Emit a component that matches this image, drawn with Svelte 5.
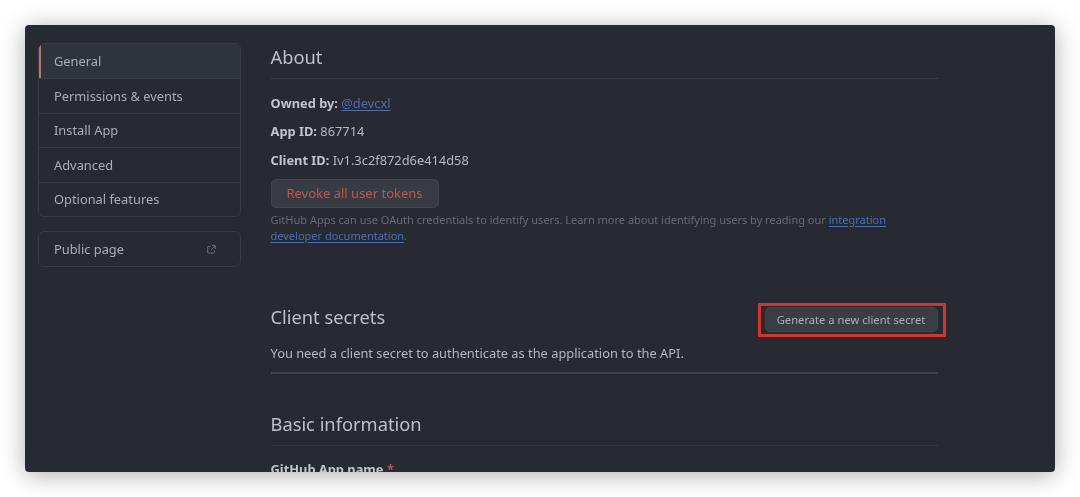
<script>
    const menu = ['General', 'Permissions & events', 'Install App', 'Advanced', 'Optional features']
</script>

<div class="page">
    <div class="window">
        <aside>
            <nav class="menu">
                {#each menu as item, i}
                    <a class="item" class:selected={i === 0}>{item}</a>
                {/each}
            </nav>
            <nav class="menu public">
                <a class="item">
                    Public page
                    <svg width="9" height="9" viewBox="0 0 10 10" fill="none" stroke="#6b7280" stroke-width="1.1">
                        <path d="M4 1.5H1.5a.7.7 0 0 0-.7.7v6a.7.7 0 0 0 .7.7h6a.7.7 0 0 0 .7-.7V6" />
                        <path d="M5.5.8h3.7v3.7M9 1 4.6 5.4" />
                    </svg>
                </a>
            </nav>
        </aside>

        <main>
            <section class="about">
                <h2>About</h2>
                <p class="row"><b>Owned by:</b> <a href="#owner">@devcxl</a></p>
                <p class="row"><b>App ID:</b> 867714</p>
                <p class="row"><b>Client ID:</b> Iv1.3c2f872d6e414d58</p>
                <button class="revoke">Revoke all user tokens</button>
                <p class="note">
                    GitHub Apps can use OAuth credentials to identify users. Learn more about identifying users by reading our <a href="#docs">integration developer documentation</a>.
                </p>
            </section>

            <section class="secrets">
                <div class="secrets-head">
                    <h2>Client secrets</h2>
                    <div class="highlight"><button class="generate">Generate a new client secret</button></div>
                </div>
                <p class="secrets-text">You need a client secret to authenticate as the application to the API.</p>
            </section>

            <section class="basic">
                <h2>Basic information</h2>
                <label>GitHub App name <span>*</span></label>
            </section>
        </main>
    </div>
</div>

<style>
    :global(body) {
        margin: 0;
        background: #fff;
    }

    .page {
        padding: 25px 25px 0;
        height: 472px;
        overflow: hidden;
        font-family: "Noto Sans", sans-serif;
    }

    .window {
        display: flex;
        height: 447px;
        box-sizing: border-box;
        padding: 18px 0 0 13px;
        gap: 29.5px;
        overflow: hidden;
        background: #272a30;
        border-radius: 4px;
        box-shadow: 0 3px 24px rgba(0, 0, 0, 0.32);
        color: #b4b9c1;
        font-size: 12.85px;
    }

    aside {
        width: 203px;
        flex: none;
        filter: blur(0.35px);
    }

    .menu {
        border: 1px solid #373b43;
        border-radius: 6px;
        overflow: hidden;
    }

    .public {
        margin-top: 14px;
    }

    .item {
        display: flex;
        align-items: center;
        justify-content: space-between;
        box-sizing: border-box;
        height: 34.4px;
        padding: 0 24px 0 15px;
        color: #a9aeb7;
        border-top: 1px solid #383c44;
    }

    .item:first-child {
        border-top: 0;
    }

    .selected {
        background: #2f343c;
        box-shadow: inset 2px 0 0 #b5796a;
    }

    main {
        width: 667px;
        flex: none;
        filter: blur(0.35px);
    }

    h2 {
        margin: 0;
        font-size: 18.3px;
        font-weight: 400;
        line-height: 28px;
        color: #bcc0c8;
    }

    .about h2 {
        padding-bottom: 7px;
        border-bottom: 1px solid #383c44;
        margin-bottom: 10px;
    }

    .row {
        margin: 0;
        height: 28.4px;
        line-height: 28px;
        color: #b4b9c1;
    }

    .row b {
        font-weight: 700;
        color: #c0c4cb;
    }

    a[href] {
        color: #4a6fb5;
        text-decoration: underline;
        text-underline-offset: 2px;
    }

    button {
        font-family: inherit;
        border-radius: 5px;
        cursor: pointer;
    }

    .revoke {
        display: block;
        margin-top: 4.5px;
        width: 168px;
        height: 29px;
        padding: 0;
        font-size: 13px;
        color: #c0564f;
        background: #373b42;
        border: 1px solid #42464e;
    }

    .note {
        margin: 4px 0 0;
        font-size: 11px;
        line-height: 16px;
        color: #666b74;
    }

    .secrets {
        margin-top: 59px;
        border-bottom: 2px solid #3e4249;
        padding-bottom: 10px;
    }

    .secrets-head {
        display: flex;
        align-items: flex-start;
        justify-content: space-between;
    }

    .highlight {
        margin-right: -8px;
        padding: 1px 5px 2px 4px;
        border: 3px solid #d2352b;
    }

    .generate {
        display: block;
        width: 173px;
        height: 25px;
        padding: 0;
        font-size: 11.2px;
        color: #a9aeb7;
        background: #393d46;
        border: 1px solid #42464e;
    }

    .secrets-text {
        margin: 7px 0 0;
        color: #b4b9c1;
    }

    .basic {
        margin-top: 36px;
    }

    .basic h2 {
        padding-bottom: 7px;
        border-bottom: 1px solid #33363e;
        margin-bottom: 14px;
    }

    label {
        font-weight: 700;
        color: #c0c4cb;
    }

    label span {
        color: #b4564f;
    }
</style>
